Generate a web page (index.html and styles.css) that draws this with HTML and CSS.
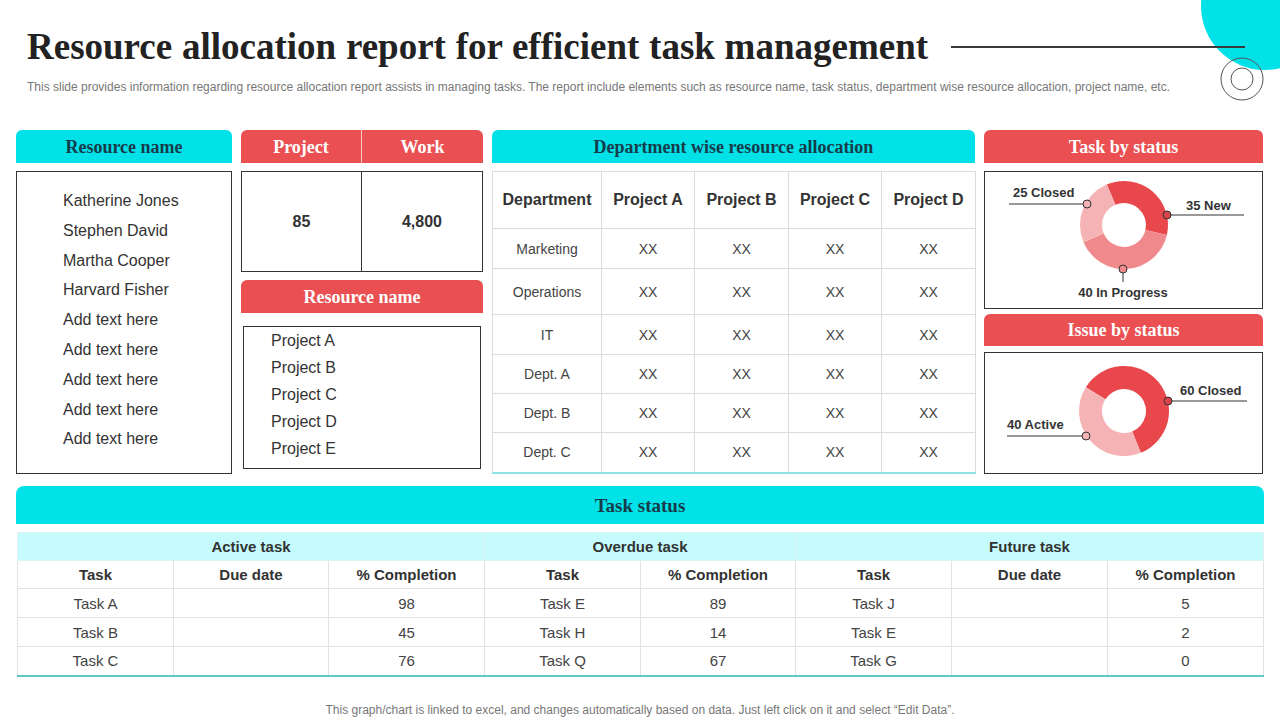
FILE: index.html
```html
<!DOCTYPE html>
<html lang="en">
<head>
<meta charset="utf-8">
<title>Resource allocation report</title>
<link rel="stylesheet" href="styles.css">
</head>
<body>
<div class="slide">
  <div class="deco-blob"></div>
  <svg class="deco-rings" viewBox="0 0 44 44" width="44" height="44">
    <circle cx="22" cy="22" r="21" fill="none" stroke="#555" stroke-width="1"/>
    <circle cx="22" cy="22" r="11" fill="none" stroke="#555" stroke-width="1"/>
  </svg>

  <header class="head">
    <h1 class="title">Resource allocation report for efficient task management</h1>
    <div class="rule"></div>
  </header>
  <p class="sub">This slide provides information regarding resource allocation report assists in managing tasks. The report include elements such as resource name, task status, department wise resource allocation, project name, etc.</p>

  <div class="top">
    <section class="col">
      <div class="hdr hdr-cyan">Resource name</div>
      <ul class="box res-list">
        <li>Katherine Jones</li>
        <li>Stephen David</li>
        <li>Martha Cooper</li>
        <li>Harvard Fisher</li>
        <li>Add text here</li>
        <li>Add text here</li>
        <li>Add text here</li>
        <li>Add text here</li>
        <li>Add text here</li>
      </ul>
    </section>

    <section class="col">
      <div class="hdr hdr-red split">
        <span>Project</span>
        <span class="split-r">Work</span>
      </div>
      <div class="box vals">
        <span>85</span>
        <span class="vals-r">4,800</span>
      </div>
      <div class="hdr hdr-red hdr-gap">Resource name</div>
      <ul class="box proj-list">
        <li>Project A</li>
        <li>Project B</li>
        <li>Project C</li>
        <li>Project D</li>
        <li>Project E</li>
      </ul>
    </section>

    <section class="col">
      <div class="hdr hdr-cyan">Department wise resource allocation</div>
      <table class="dept">
        <colgroup>
          <col class="c109"><col class="c93"><col class="c94"><col class="c93"><col class="c94">
        </colgroup>
        <thead>
          <tr class="r57"><th>Department</th><th>Project A</th><th>Project B</th><th>Project C</th><th>Project D</th></tr>
        </thead>
        <tbody>
          <tr class="r40"><td>Marketing</td><td>XX</td><td>XX</td><td>XX</td><td>XX</td></tr>
          <tr class="r46"><td>Operations</td><td>XX</td><td>XX</td><td>XX</td><td>XX</td></tr>
          <tr class="r40"><td>IT</td><td>XX</td><td>XX</td><td>XX</td><td>XX</td></tr>
          <tr class="r39"><td>Dept. A</td><td>XX</td><td>XX</td><td>XX</td><td>XX</td></tr>
          <tr class="r39"><td>Dept. B</td><td>XX</td><td>XX</td><td>XX</td><td>XX</td></tr>
          <tr class="r40"><td>Dept. C</td><td>XX</td><td>XX</td><td>XX</td><td>XX</td></tr>
        </tbody>
      </table>
    </section>

    <section class="col">
      <div class="hdr hdr-red">Task by status</div>
      <div class="box chart chart-task">
        <svg width="277" height="136" viewBox="0 0 277 136">
          <path d="M121.81,12.50 A44,44 0 0 1 181.87,62.90 L160.44,57.95 A22,22 0 0 0 130.40,32.75 Z" fill="#E8474C"/>
          <path d="M181.87,62.90 A44,44 0 0 1 98.50,70.19 L118.75,61.60 A22,22 0 0 0 160.44,57.95 Z" fill="#F0898C"/>
          <path d="M98.50,70.19 A44,44 0 0 1 121.81,12.50 L130.40,32.75 A22,22 0 0 0 118.75,61.60 Z" fill="#F6B3B5"/>
          <line x1="24" y1="32" x2="102" y2="32" stroke="#333" stroke-width="1"/>
          <circle cx="102" cy="32" r="4" fill="#F6B3B5" stroke="#333" stroke-width="1"/>
          <text x="28" y="25" class="lbl">25 Closed</text>
          <line x1="182" y1="43" x2="259" y2="43" stroke="#333" stroke-width="1"/>
          <circle cx="182" cy="43" r="4" fill="#D9434A" stroke="#333" stroke-width="1"/>
          <text x="201" y="38" class="lbl">35 New</text>
          <line x1="138" y1="97" x2="138" y2="110" stroke="#333" stroke-width="1"/>
          <circle cx="138" cy="97" r="4" fill="#F0898C" stroke="#333" stroke-width="1"/>
          <text x="138" y="125" class="lbl" text-anchor="middle">40 In Progress</text>
        </svg>
      </div>
      <div class="hdr hdr-red hdr-gap2">Issue by status</div>
      <div class="box chart chart-issue">
        <svg width="277" height="117" viewBox="0 0 277 117">
          <path d="M100.84,34.15 A45,45 0 1 1 155.86,99.72 L147.24,78.40 A22,22 0 1 0 120.34,46.34 Z" fill="#E8474C"/>
          <path d="M155.86,99.72 A45,45 0 0 1 100.84,34.15 L120.34,46.34 A22,22 0 0 0 147.24,78.40 Z" fill="#F6B3B5"/>
          <line x1="183" y1="48" x2="262" y2="48" stroke="#333" stroke-width="1"/>
          <circle cx="183" cy="48" r="4" fill="#D9434A" stroke="#333" stroke-width="1"/>
          <text x="195" y="42" class="lbl">60 Closed</text>
          <line x1="22" y1="83" x2="101" y2="83" stroke="#333" stroke-width="1"/>
          <circle cx="101" cy="83" r="4" fill="#F6B3B5" stroke="#333" stroke-width="1"/>
          <text x="22" y="76" class="lbl">40 Active</text>
        </svg>
      </div>
    </section>
  </div>

  <section class="tasks">
    <div class="bar">Task status</div>
    <table class="tt">
      <colgroup>
        <col class="w156"><col class="w155"><col class="w156"><col class="w156"><col class="w155"><col class="w156"><col class="w156"><col class="w156">
      </colgroup>
      <thead>
        <tr class="grp"><th colspan="3">Active task</th><th colspan="2">Overdue task</th><th colspan="3">Future task</th></tr>
        <tr class="subh"><th>Task</th><th>Due date</th><th>% Completion</th><th>Task</th><th>% Completion</th><th>Task</th><th>Due date</th><th>% Completion</th></tr>
      </thead>
      <tbody>
        <tr><td>Task A</td><td></td><td>98</td><td>Task E</td><td>89</td><td>Task J</td><td></td><td>5</td></tr>
        <tr><td>Task B</td><td></td><td>45</td><td>Task H</td><td>14</td><td>Task E</td><td></td><td>2</td></tr>
        <tr><td>Task C</td><td></td><td>76</td><td>Task Q</td><td>67</td><td>Task G</td><td></td><td>0</td></tr>
      </tbody>
    </table>
  </section>

  <p class="foot">This graph/chart is linked to excel, and changes automatically based on data. Just left click on it and select “Edit Data”.</p>
</div>
</body>
</html>
```

FILE: styles.css
```css
* {
  box-sizing: border-box;
  margin: 0;
  padding: 0;
}

body {
  width: 1280px;
  height: 720px;
  overflow: hidden;
  background: #fff;
  font-family: "Liberation Sans", Arial, sans-serif;
  color: #333;
}

.slide {
  position: relative;
  width: 1280px;
  height: 720px;
  overflow: hidden;
}

.deco-blob {
  position: absolute;
  left: 1201px;
  top: -58px;
  width: 128px;
  height: 128px;
  border-radius: 50%;
  background: #00E1E8;
}

.deco-rings {
  position: absolute;
  left: 1220px;
  top: 57px;
}

.head {
  position: relative;
  display: flex;
  align-items: center;
  height: 67px;
  padding: 27px 35px 0 27px;
}

.title {
  font-family: "Liberation Serif", "Times New Roman", serif;
  font-weight: 700;
  font-size: 37px;
  line-height: 40px;
  color: #222;
  word-spacing: 0.5px;
  white-space: nowrap;
}

.rule {
  margin-left: auto;
  width: 294px;
  height: 2px;
  background: #3a3a3a;
}

.sub {
  margin: 13px 0 0 27px;
  font-size: 12px;
  line-height: 14px;
  color: #777;
  letter-spacing: 0;
  white-space: nowrap;
}

.top {
  display: grid;
  grid-template-columns: 216px 242px 483px 279px;
  column-gap: 9px;
  height: 342px;
  margin: 36px 0 0 16px;
}

.col {
  display: flex;
  flex-direction: column;
}

.hdr {
  height: 33px;
  line-height: 34px;
  text-align: center;
  font-family: "Liberation Serif", "Times New Roman", serif;
  font-weight: 700;
  font-size: 18px;
  border-radius: 6px 6px 0 0;
  white-space: nowrap;
}

.hdr-cyan {
  background: #00E1E8;
  color: #163c4a;
}

.hdr-red {
  background: #EA5052;
  color: #fff;
}

.box {
  border: 1px solid #333;
}

.res-list {
  margin-top: 8px;
  flex: 1;
  list-style: none;
  padding: 14px 0 0 46px;
  font-size: 16px;
  line-height: 29.8px;
  color: #333;
}

.split {
  display: grid;
  grid-template-columns: 120px 1fr;
}

.split-r {
  border-left: 1px solid #f6c9c9;
}

.vals {
  margin-top: 8px;
  height: 101px;
  display: grid;
  grid-template-columns: 119px 1fr;
  align-items: center;
  text-align: center;
  font-weight: 700;
  font-size: 16px;
}

.vals span {
  display: flex;
  align-items: center;
  justify-content: center;
  height: 100%;
}

.vals .vals-r {
  border-left: 1px solid #333;
}

.hdr-gap {
  margin-top: 8px;
}

.proj-list {
  flex: 1;
  margin: 13px 2px 5px;
  list-style: none;
  padding: 0 0 0 27px;
  font-size: 16px;
  line-height: 27px;
}

.dept {
  margin-top: 8px;
  width: 483px;
  border-collapse: collapse;
  table-layout: fixed;
  text-align: center;
  border-bottom: 2px solid #8fe2e6;
}

.dept th,
.dept td {
  border: 1px solid #dcdcdc;
  padding: 0;
}

.dept th {
  font-size: 16px;
  font-weight: 700;
  color: #333;
}

.dept td {
  font-size: 14px;
  color: #444;
}

.dept tbody tr:last-child td {
  border-bottom: 2px solid #8fe2e6;
}

.c109 { width: 109px; }
.c93 { width: 93px; }
.c94 { width: 94px; }

.r57 { height: 57px; }
.r46 { height: 46px; }
.r40 { height: 40px; }
.r39 { height: 39px; }

.chart-task {
  margin-top: 8px;
  height: 138px;
}

.hdr-gap2 {
  margin-top: 5px;
  height: 32px;
  line-height: 33px;
}

.chart-issue {
  margin-top: 6px;
  flex: 1;
}

.chart svg {
  display: block;
}

.lbl {
  font-family: "Liberation Sans", Arial, sans-serif;
  font-weight: 700;
  font-size: 13px;
  fill: #333;
}

.tasks {
  margin: 14px 16px 0 16px;
}

.bar {
  height: 38px;
  line-height: 39px;
  text-align: center;
  background: #00E1E8;
  border-radius: 8px 8px 0 0;
  font-family: "Liberation Serif", "Times New Roman", serif;
  font-weight: 700;
  font-size: 19px;
  color: #163c4a;
}

.tt {
  margin: 8px 1px 0;
  width: 1246px;
  border-collapse: collapse;
  table-layout: fixed;
  text-align: center;
  font-size: 15px;
  color: #444;
}

.w155 { width: 155px; }
.w156 { width: 156px; }

.tt th,
.tt td {
  border: 1px solid #e2e2e2;
  padding: 0;
}

.tt .grp {
  height: 28px;
  background: #C6FBFD;
}

.tt .grp th {
  border-color: #dff3f4;
  font-weight: 700;
  color: #333;
}

.tt .subh {
  height: 28px;
}

.tt .subh th {
  font-weight: 700;
  color: #333;
}

.tt tbody tr {
  height: 29px;
}

.tt tbody tr:last-child td {
  border-bottom: 2px solid #5cc6c8;
}

.foot {
  margin-top: 27px;
  text-align: center;
  font-size: 12px;
  line-height: 13px;
  color: #777;
  letter-spacing: 0;
}
```
